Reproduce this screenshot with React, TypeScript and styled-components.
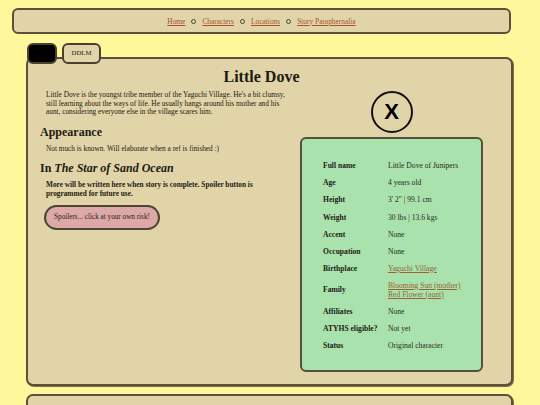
import { createGlobalStyle } from "styled-components";
import styled from "styled-components";

const Global = createGlobalStyle`
  html, body {
    margin: 0;
    padding: 0;
    background-color: #fff79b;
  }
  body {
    font-family: 'Liberation Serif', Georgia, serif;
    color: #1e1a12;
  }
`

const Page = styled.div`
  padding-top: 8px;
  width: 540px;
  height: 405px;
  overflow: hidden;
  box-sizing: border-box;
`

const Nav = styled.nav`
  margin: 0 29px 0 12px;
  height: 26px;
  box-sizing: border-box;
  background-color: #e0d4a8;
  border: 2px solid #5c5038;
  border-radius: 6px;
  display: flex;
  align-items: center;
  justify-content: center;
  gap: 6px;
`

const NavLink = styled.a`
  color: #a8532f;
  text-decoration: underline;
  font-size: 7.4px;
`

const Bullet = styled.span`
  width: 3px;
  height: 3px;
  border: 1.3px solid #4a4232;
  border-radius: 50%;
`

const Section = styled.section`
  margin: 9px 27px 0 26px;
`

const Tabs = styled.div`
  display: flex;
  gap: 5px;
  padding-left: 1px;
  margin-bottom: -7px;
  position: relative;
  z-index: 1;
`

const Tab = styled.div<{ $dark?: boolean }>`
  height: 21px;
  width: ${p => (p.$dark ? "30px" : "39px")};
  box-sizing: border-box;
  border: 2px solid #4a4030;
  border-radius: 6px;
  background-color: ${p => (p.$dark ? "#000" : "#e0d4a8")};
  font-size: 6.8px;
  display: flex;
  justify-content: center;
  padding-top: 4px;
`

const Panel = styled.div<{ $h: number }>`
  height: ${p => p.$h}px;
  box-sizing: border-box;
  background-color: #e0d4a8;
  border: 2px solid #5c5038;
  border-radius: 7px;
  box-shadow: 1px 1px 0 #7a6e50;
  padding: 7px 28px 0 12px;
`

const Title = styled.h1`
  margin: 0;
  text-align: center;
  font-size: 16px;
  font-weight: bold;
  height: 21px;
  line-height: 21px;
`

const Columns = styled.div`
  display: grid;
  grid-template-columns: 245px 183px;
  column-gap: 15px;
  margin-top: 4px;
`

const Left = styled.div`
  display: flex;
  flex-direction: column;
`

const Para = styled.p<{ $bold?: boolean }>`
  margin: 0 0 0 6px;
  font-size: 7.3px;
  line-height: 8.6px;
  font-weight: ${p => (p.$bold ? "bold" : "normal")};
`

const Heading = styled.h2`
  margin: 8px 0 6px 0;
  font-size: 12px;
  line-height: 14px;
  font-weight: bold;
`

const SpoilerButton = styled.button`
  margin: 6px 0 0 4px;
  width: 116px;
  height: 25px;
  background-color: #dca8a8;
  border: 2px solid #4f4535;
  border-radius: 13px;
  font-family: 'Liberation Serif', serif;
  font-size: 7.2px;
  color: #2a2018;
  padding: 0;
`

const Right = styled.div`
  display: flex;
  flex-direction: column;
  align-items: center;
`

const Circle = styled.div`
  width: 42px;
  height: 42px;
  box-sizing: border-box;
  border: 2px solid #111;
  border-radius: 50%;
  display: flex;
  align-items: center;
  justify-content: center;
  font-family: 'Liberation Sans', Arial, sans-serif;
  font-weight: bold;
  font-size: 22px;
  color: #000;
`

const Card = styled.div`
  margin-top: 4px;
  width: 183px;
  height: 235px;
  box-sizing: border-box;
  background-color: #a9e2ad;
  border: 2px solid #55503a;
  border-radius: 6px;
  padding: 19px 0 0 21px;
`

const InfoTable = styled.table`
  border-collapse: collapse;
  font-size: 7.6px;
`

const Label = styled.th`
  text-align: left;
  font-weight: bold;
  width: 65px;
  padding: 4.25px 0;
  line-height: 8.6px;
`

const Value = styled.td`
  padding: 4.25px 0;
  line-height: 8.6px;
  color: #2a2a22;
`

const CardLink = styled.a`
  color: #9a6234;
  text-decoration: underline;
`

const rows: [string, React.ReactNode][] = [
  ["Full name", "Little Dove of Junipers"],
  ["Age", "4 years old"],
  ["Height", "3' 2\" | 99.1 cm"],
  ["Weight", "30 lbs | 13.6 kgs"],
  ["Accent", "None"],
  ["Occupation", "None"],
  ["Birthplace", <CardLink key="b">Yaguchi Village</CardLink>],
  [
    "Family",
    <>
      <CardLink>Blooming Sun (mother)</CardLink>
      <br />
      <CardLink>Red Flower (aunt)</CardLink>
    </>,
  ],
  ["Affiliates", "None"],
  ["ATYHS eligible?", "Not yet"],
  ["Status", "Original character"],
]

export default function App() {
  return (
    <Page>
      <Global />
      <Nav>
        <NavLink>Home</NavLink>
        <Bullet />
        <NavLink>Characters</NavLink>
        <Bullet />
        <NavLink>Locations</NavLink>
        <Bullet />
        <NavLink>Story Paraphernalia</NavLink>
      </Nav>
      <Section>
        <Tabs>
          <Tab $dark />
          <Tab>DDLM</Tab>
        </Tabs>
        <Panel $h={329}>
          <Title>Little Dove</Title>
          <Columns>
            <Left>
              <Para>
                Little Dove is the youngst tribe member of the Yaguchi Village. He's a bit clumsy,
                still learning about the ways of life. He usually hangs around his mother and his
                aunt, considering everyone else in the village scares him.
              </Para>
              <Heading>Appearance</Heading>
              <Para>Not much is known. Will elaborate when a ref is finished :)</Para>
              <Heading>
                In <i>The Star of Sand Ocean</i>
              </Heading>
              <Para $bold>
                More will be written here when story is complete. Spoiler button is programmed
                for future use.
              </Para>
              <div>
                <SpoilerButton>Spoilers... click at your own risk!</SpoilerButton>
              </div>
            </Left>
            <Right>
              <Circle>X</Circle>
              <Card>
                <InfoTable>
                  <tbody>
                    {rows.map(([k, v]) => (
                      <tr key={k}>
                        <Label>{k}</Label>
                        <Value>{v}</Value>
                      </tr>
                    ))}
                  </tbody>
                </InfoTable>
              </Card>
            </Right>
          </Columns>
        </Panel>
        <Panel $h={40} style={{ marginTop: 8 }} />
      </Section>
    </Page>
  )
}
